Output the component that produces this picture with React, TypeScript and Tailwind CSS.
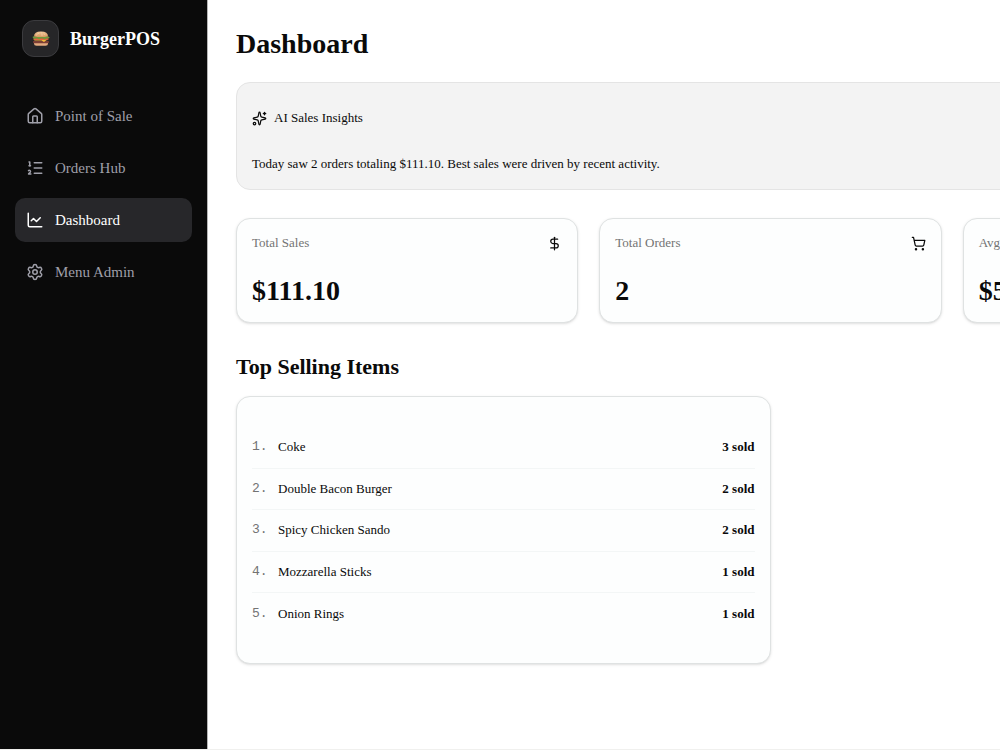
import React from 'react';
import {
  ChartLine,
  DollarSign,
  House,
  ListOrdered,
  Settings,
  ShoppingCart,
  Sparkles,
} from 'lucide-react';

interface NavItem {
  label: string;
  icon: React.ReactNode;
  active?: boolean;
}

interface StatCardProps {
  label: string;
  value: string;
  icon: React.ReactNode;
}

const navItems: NavItem[] = [
  { label: 'Point of Sale', icon: <House className="size-[18px]" /> },
  { label: 'Orders Hub', icon: <ListOrdered className="size-[18px]" /> },
  { label: 'Dashboard', icon: <ChartLine className="size-[18px]" />, active: true },
  { label: 'Menu Admin', icon: <Settings className="size-[18px]" /> },
];

const topItems = [
  { name: 'Coke', sold: 3 },
  { name: 'Double Bacon Burger', sold: 2 },
  { name: 'Spicy Chicken Sando', sold: 2 },
  { name: 'Mozzarella Sticks', sold: 1 },
  { name: 'Onion Rings', sold: 1 },
];

function BurgerLogo() {
  return (
    <svg viewBox="0 0 36 30" className="w-[18px] h-[15px]" aria-hidden="true">
      <defs>
        <linearGradient id="bun" x1="0" y1="0" x2="0" y2="1">
          <stop offset="0" stopColor="#f0c596" />
          <stop offset="1" stopColor="#d89a63" />
        </linearGradient>
      </defs>
      <path d="M4 24h28v1.500q0 4-5 4H9q-5 0-5-4z" fill="#e3ab80" />
      <rect x="2" y="19.500" width="32" height="5" rx="2.500" fill="#7b3f35" />
      <path d="M3 16h30l-5 3-4 3-5-3H5z" fill="#f5b93c" />
      <rect x="3" y="14" width="30" height="3.500" rx="1.700" fill="#d9503c" />
      <path d="M1 12q2-2 4-1h26q3-1 4 2 0 2-3 2-3-1-5 1-3 1-5-1-4-1-6 1-3 1-5-1-3-1-5 1-4 0-5-4z" fill="#6d9a3c" />
      <path d="M4 11Q4 1 18 1t14 10q-14 2-28 0z" fill="url(#bun)" />
      <path d="M12 5l2-.5M18 4h2M24 6l1 .5M9 8l1-.5M19 8h2" stroke="#fbe6c6" strokeLinecap="round" />
    </svg>
  );
}

function Sidebar() {
  return (
    <aside className="w-[208px] shrink-0 bg-[#0a0a0a] border-r border-[#b5b5b5] px-[15px]">
      <div className="flex items-center gap-[11px] pt-5 px-[7px]">
        <div className="size-[37px] rounded-xl bg-[#262628] border border-[#3b3b3e] flex items-center justify-center">
          <BurgerLogo />
        </div>
        <span className="text-[18px] leading-6 font-bold text-white">BurgerPOS</span>
      </div>
      <nav className="mt-[37px] flex flex-col gap-2">
        {navItems.map((item) => (
          <a
            key={item.label}
            href="#"
            className={`flex items-center gap-[11px] h-11 px-[11px] rounded-[10px] text-[15px] ${
              item.active ? 'bg-[#27272a] text-white' : 'text-[#9f9fa9]'
            }`}
          >
            {item.icon}
            {item.label}
          </a>
        ))}
      </nav>
    </aside>
  );
}

function StatCard({ label, value, icon }: StatCardProps) {
  return (
    <div className="bg-[#fdfefe] border border-[#dfe2e2] rounded-[14px] shadow-sm px-[15px] pt-[14px] pb-[15px]">
      <div className="flex items-center justify-between mb-[22px]">
        <h3 className="text-[13px] leading-5 text-[#737373]">{label}</h3>
        {icon}
      </div>
      <p className="text-[28px] leading-8 font-bold">{value}</p>
    </div>
  );
}

export default function App() {
  return (
    <div className="flex min-h-screen overflow-hidden bg-white border-b border-[#f0f0ee] text-[#0a0a0a] font-['Liberation_Serif',serif]">
      <Sidebar />

      <main className="flex-1 min-w-0 px-7 pt-7 pb-7">
        {/* The stats row keeps its width and runs past narrow windows */}
        <div className="min-w-[1069px]">
          <h1 className="text-[28px] leading-8 font-bold">Dashboard</h1>

          <section className="mt-[22px] bg-[#f3f3f3] border border-[#e4e4e4] rounded-[14px] px-[15px] pt-[25px] pb-[15px]">
            <h2 className="flex items-center gap-[7px] text-[13px] leading-5">
              <Sparkles className="size-[15px]" />
              AI Sales Insights
            </h2>
            <p className="mt-[26px] text-[13px] leading-5">
              Today saw 2 orders totaling $111.10. Best sales were driven by recent activity.
            </p>
          </section>

          <section className="mt-7 grid grid-cols-3 gap-[21px]">
            <StatCard label="Total Sales" value="$111.10" icon={<DollarSign className="size-[15px]" />} />
            <StatCard label="Total Orders" value="2" icon={<ShoppingCart className="size-[15px]" />} />
            <StatCard label="Avg Order Value" value="$55.55" icon={<ChartLine className="size-[15px]" />} />
          </section>

          <h2 className="mt-[30px] text-[22px] leading-7 font-bold">Top Selling Items</h2>

          <section className="mt-[15px] w-1/2 bg-[#fdfefe] border border-[#dfe2e2] rounded-[14px] shadow-sm px-[15px] pt-[30px] pb-7">
            <ol className="grid auto-rows-fr min-h-[208px] text-[13px] leading-5">
              {topItems.map((item, index) => (
                <li
                  key={item.name}
                  className="flex items-center border-b border-[#f3f6f6] last:border-b-0"
                >
                  <span className="w-[26px] text-[#737373] font-['Liberation_Mono',monospace]">{index + 1}.</span>
                  <span>{item.name}</span>
                  <span className="ml-auto font-bold">{item.sold} sold</span>
                </li>
              ))}
            </ol>
          </section>
        </div>
      </main>
    </div>
  );
}
